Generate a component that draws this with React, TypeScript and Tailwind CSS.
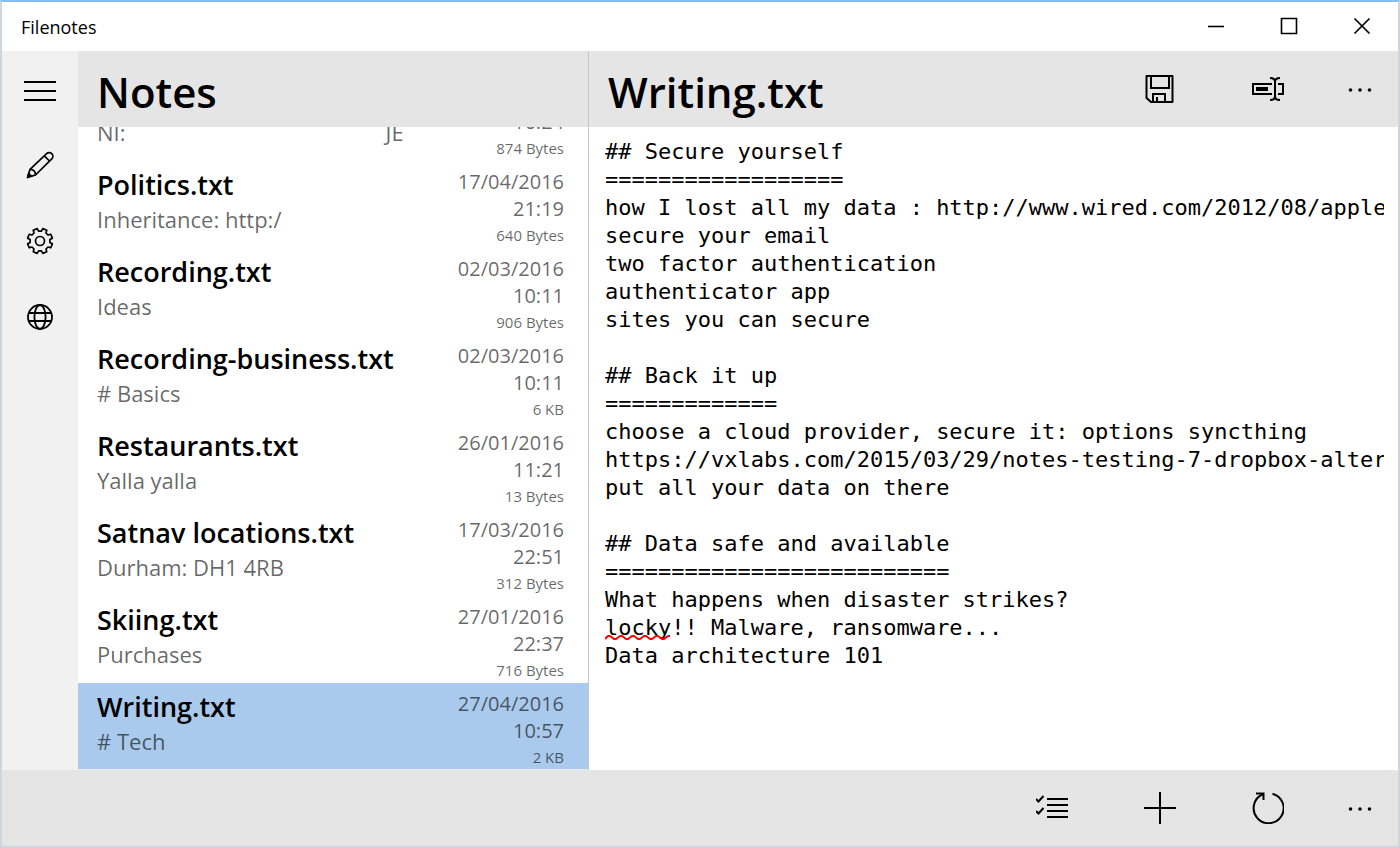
import { useState } from 'react';
import type { ReactNode } from 'react';

type Note = {
  name: string;
  preview: ReactNode;
  date: string;
  time: string;
  size: string;
};

const notes: Note[] = [
  {
    name: '',
    preview: (
      <>
        NI:<span className="inline-block w-[260px]" />JE
      </>
    ),
    date: '',
    time: '16:24',
    size: '874 Bytes',
  },
  { name: 'Politics.txt', preview: 'Inheritance: http:/', date: '17/04/2016', time: '21:19', size: '640 Bytes' },
  { name: 'Recording.txt', preview: 'Ideas', date: '02/03/2016', time: '10:11', size: '906 Bytes' },
  { name: 'Recording-business.txt', preview: '# Basics', date: '02/03/2016', time: '10:11', size: '6 KB' },
  { name: 'Restaurants.txt', preview: 'Yalla yalla', date: '26/01/2016', time: '11:21', size: '13 Bytes' },
  { name: 'Satnav locations.txt', preview: 'Durham: DH1 4RB', date: '17/03/2016', time: '22:51', size: '312 Bytes' },
  { name: 'Skiing.txt', preview: 'Purchases', date: '27/01/2016', time: '22:37', size: '716 Bytes' },
  { name: 'Writing.txt', preview: '# Tech', date: '27/04/2016', time: '10:57', size: '2 KB' },
];

const initialText = `## Secure yourself
==================
how I lost all my data : http://www.wired.com/2012/08/apple-
secure your email
two factor authentication
authenticator app
sites you can secure

## Back it up
=============
choose a cloud provider, secure it: options syncthing
https://vxlabs.com/2015/03/29/notes-testing-7-dropbox-alternatives
put all your data on there

## Data safe and available
==========================
What happens when disaster strikes?
locky!! Malware, ransomware...
Data architecture 101`;

function Icon({ children, width = 2 }: { children: ReactNode; width?: number }) {
  return (
    <svg width="32" height="32" viewBox="0 0 32 32" fill="none" stroke="black" strokeWidth={width} aria-hidden="true">
      {children}
    </svg>
  );
}

function IconButton({ label, className, children }: { label: string; className: string; children: ReactNode }) {
  return (
    <button type="button" aria-label={label} className={`flex shrink-0 items-center justify-center hover:bg-black/10 ${className}`}>
      {children}
    </button>
  );
}

function MoreIcon() {
  return (
    <Icon>
      <g fill="black" stroke="none">
        <circle cx="6.5" cy="17" r="1.8" />
        <circle cx="16" cy="17" r="1.8" />
        <circle cx="25.5" cy="17" r="1.8" />
      </g>
    </Icon>
  );
}

function gearPath() {
  const teeth = 8;
  const c = 16;
  const pts: string[] = [];
  for (let i = 0; i < teeth; i++) {
    const mid = (i + 0.5) * ((2 * Math.PI) / teeth);
    [[-0.25, 10], [-0.17, 12.7], [0.17, 12.7], [0.25, 10]].forEach(([a, r]) => {
      pts.push(`${(c + r * Math.cos(mid + a)).toFixed(2)} ${(c + r * Math.sin(mid + a)).toFixed(2)}`);
    });
  }
  return `M${pts.join('L')}Z`;
}

export default function App() {
  const [selected, setSelected] = useState('Writing.txt');
  const [text, setText] = useState(initialText);

  return (
    <div className="flex h-screen flex-col overflow-hidden border-2 border-[#d0d5db] border-t-[#86bdf2] bg-white font-['Open_Sans','Noto_Sans',sans-serif] text-black">
      <header className="flex h-[49px] shrink-0 items-stretch">
        <h1 className="flex-1 self-center pl-[19px] text-lg">Filenotes</h1>
        <IconButton label="Minimize" className="w-[73px]">
          <Icon width={1.6}>
            <path d="M8 15.5h16" />
          </Icon>
        </IconButton>
        <IconButton label="Maximize" className="w-[73px]">
          <Icon width={1.6}>
            <path d="M8.5 7.5h15v15h-15z" />
          </Icon>
        </IconButton>
        <IconButton label="Close" className="w-[73px]">
          <Icon width={1.7}>
            <path d="M8.5 7.5l15 15M23.5 7.5l-15 15" />
          </Icon>
        </IconButton>
      </header>

      <div className="flex min-h-0 flex-1">
        <nav className="flex w-[76px] shrink-0 flex-col bg-[#f1f1f1]">
          <IconButton label="Menu" className="h-[76px]">
            <Icon>
              <path d="M0 9h32M0 18h32M0 27h32" />
            </Icon>
          </IconButton>
          <IconButton label="Edit" className="h-[76px]">
            <Icon width={1.7}>
              <path d="M3.7 28.3l2.3-8L22.6 4.7a3.6 3.6 0 0 1 5.2 5.2L11.5 26z" strokeLinejoin="round" />
              <path d="M20.3 6.8l5.2 5.2M6 20.3c3.4 0 5.5 2.2 5.5 5.7" />
              <path d="M3.7 28.3l1-3.8 2.8 2.6z" fill="black" />
            </Icon>
          </IconButton>
          <IconButton label="Settings" className="h-[76px]">
            <Icon width={1.7}>
              <path d={gearPath()} strokeLinejoin="round" />
              <circle cx="16" cy="16" r="4.5" />
            </Icon>
          </IconButton>
          <IconButton label="Website" className="h-[76px]">
            <Icon width={1.8}>
              <circle cx="16" cy="16" r="12" />
              <ellipse cx="16" cy="16" rx="5.6" ry="12" />
              <path d="M5 12h22M5 20h22" />
            </Icon>
          </IconButton>
        </nav>

        <section className="flex w-[511px] shrink-0 flex-col border-r border-[#c4c4c4]">
          <h2 className="flex h-[76px] shrink-0 items-center bg-[#e5e5e5] pt-1 pl-[19px] text-[42px] font-semibold">Notes</h2>
          {/* column-reverse keeps the list scrolled to its end */}
          <div className="flex min-h-0 flex-1 flex-col-reverse overflow-y-auto [scrollbar-width:none]">
            <ul>
              {notes.map((note) => (
                <li key={note.name}>
                  <button
                    type="button"
                    onClick={() => setSelected(note.name)}
                    className={`flex h-[87px] w-full border-b pr-6 pl-[19px] ${
                      note.name === selected ? 'border-[#e5edf6] bg-[#a9caec]' : 'border-transparent'
                    }`}
                  >
                    <span className="min-w-0 flex-1 pt-[7px] text-left whitespace-nowrap">
                      <span className="block h-[34px] text-[27px] leading-[34px] font-semibold">{note.name}</span>
                      <span className="block text-[22px] leading-[34px] text-black/60">{note.preview}</span>
                    </span>
                    <span className="pt-[7px] text-right text-xl leading-[27px] text-black/60">
                      <span className="block h-[27px]">{note.date}</span>
                      <span className="block">{note.time}</span>
                      <span className="block text-[15px] leading-[26px]">{note.size}</span>
                    </span>
                  </button>
                </li>
              ))}
            </ul>
          </div>
        </section>

        <main className="flex min-w-0 flex-1 flex-col">
          <div className="flex h-[76px] shrink-0 items-stretch bg-[#e5e5e5]">
            <h2 className="flex min-w-0 flex-1 items-center pt-1 pl-[19px] text-[42px] font-semibold">Writing.txt</h2>
            <IconButton label="Save" className="w-[108px]">
              <Icon>
                <path d="M2.5 3h26v26H7l-4.5-4z" strokeLinejoin="round" />
                <path d="M7 3v12h18V3M9 29v-8h12v8M13 24v5" />
              </Icon>
            </IconButton>
            <IconButton label="Rename" className="w-[108px]">
              <Icon>
                <path d="M20 11H1v10h19M26 11h5v10h-5" />
                <path d="M4 16h12" strokeWidth="4" />
                <path d="M18 5c3 0 5 1 5 3.5v15c0 2.5-2 3.5-5 3.5M28 5c-3 0-5 1-5 3.5v15c0 2.5 2 3.5 5 3.5" />
              </Icon>
            </IconButton>
            <IconButton label="More options" className="w-[76px]">
              <MoreIcon />
            </IconButton>
          </div>
          <div className="relative flex min-h-0 flex-1 pt-[11px] pr-[14px] pl-4">
            <textarea
              aria-label="Note text"
              wrap="off"
              spellCheck={false}
              value={text}
              onChange={(e) => setText(e.target.value)}
              className="flex-1 resize-none overflow-hidden font-['DejaVu_Sans_Mono','Liberation_Mono',monospace] text-[22px] leading-7 outline-none"
            />
            {/* spelling mark */}
            <svg className="absolute top-[507px] left-4" width="66" height="7" viewBox="0 0 66 7" fill="none" stroke="#ff0000" strokeWidth="2" aria-hidden="true">
              <path d="M0 5L3 2H5L9 5H11L15 2H17L21 5H23L27 2H29L33 5H35L39 2H41L45 5H47L51 2H53L57 5H59L63 2H65" strokeLinejoin="round" />
            </svg>
          </div>
        </main>
      </div>

      <footer className="flex h-[76px] shrink-0 justify-end bg-[#e5e5e5]">
        <IconButton label="Select" className="w-[108px]">
          <Icon>
            <path d="M11 7h21M11 13h21M11 19h21M11 25h21" />
            <path d="M0 7l2.5 2.5 5-5.5M0 19l2.5 2.5 5-5.5" />
          </Icon>
        </IconButton>
        <IconButton label="New note" className="w-[108px]">
          <Icon>
            <path d="M16 0v32M0 16h32" />
          </Icon>
        </IconButton>
        <IconButton label="Refresh" className="w-[108px]">
          <Icon>
            <path d="M20.5 1.7A15 15 0 1 1 11 2.3" />
            <path d="M4 1.5h7.5V8" />
          </Icon>
        </IconButton>
        <IconButton label="More options" className="w-[76px]">
          <MoreIcon />
        </IconButton>
      </footer>
    </div>
  );
}
